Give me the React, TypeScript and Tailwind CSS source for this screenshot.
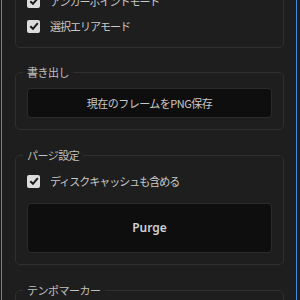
import React from 'react';

const jp = { fontFamily: '"Noto Sans CJK JP", "Noto Sans", sans-serif' };

const Check = ({ label }: { label: string }) => {
    return (
        <div className="flex h-[20px] items-center gap-[10px]">
            <span className="flex h-[13px] w-[13px] items-center justify-center rounded-[2px] bg-[#dcdcdc]">
                <svg width="10" height="10" viewBox="0 0 10 10">
                    <path d="M1.3 5.2 L4 7.8 L8.8 2.2" fill="none" stroke="#1a1a1a" strokeWidth="2" />
                </svg>
            </span>
            <span className="text-[11px] tracking-[-1px] text-[#c8c8c8]">{label}</span>
        </div>
    );
};

const Group = ({ title, children, className }: { title: string; children?: React.ReactNode; className?: string }) => {
    return (
        <fieldset className={`rounded-[5px] border border-[#2f2f2f] px-[11px] pt-[8px] pb-[11px] ${className ?? ''}`}>
            <legend className="-ml-[4px] px-[4px] text-[11px] leading-[16px] tracking-[-0.5px] text-[#c0c0c0]">
                {title}
            </legend>
            {children}
        </fieldset>
    );
};

const App = () => {
    return (
        <div className="h-[300px] w-[300px] overflow-hidden bg-[#1c1c1c]" style={jp}>
            <div className="ml-[1px] h-[300px] w-[296px] overflow-hidden border-x border-[#3d8be0] bg-[#1e1e1e] pl-[13px] pr-[12px]">
                <Group title="表示" className="-mt-[33px] pb-[8px]">
                    <div className="flex flex-col gap-[5px]">
                        <Check label="アンカーポイントモード" />
                        <Check label="選択エリアモード" />
                    </div>
                </Group>

                <Group title="書き出し" className="mt-[16px]">
                    <button className="flex h-[30px] w-full items-center justify-center rounded-[4px] border border-[#2b2b2b] bg-[#0e0e0e] text-[11px] tracking-[-0.5px] text-[#c8c8c8]">
                        現在のフレームをPNG保存
                    </button>
                </Group>

                <Group title="パージ設定" className="mt-[17px]">
                    <Check label="ディスクキャッシュも含める" />
                    <button
                        className="mt-[12px] flex h-[50px] w-full items-center justify-center rounded-[4px] border border-[#2b2b2b] bg-[#0e0e0e] text-[12px] font-semibold text-[#d0d0d0]"
                        style={{ fontFamily: '"Noto Sans", sans-serif' }}
                    >
                        Purge
                    </button>
                </Group>

                <Group title="テンポマーカー" className="mt-[17px] h-[60px]" />
            </div>
        </div>
    );
};

export default App;
